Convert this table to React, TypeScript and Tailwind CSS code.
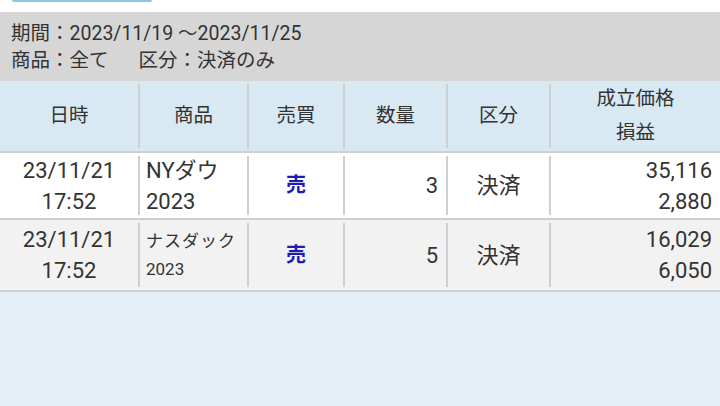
const cols =
  "grid grid-cols-[138px_2px_107px_2px_94px_2px_101px_2px_101px_2px_1fr]";

const rows = [
  {
    date: "23/11/21",
    time: "17:52",
    name: "NYダウ",
    year: "2023",
    small: false,
    qty: "3",
    kind: "決済",
    price: "35,116",
    pl: "2,880",
    bg: "bg-white",
    h: "h-[65px]",
  },
  {
    date: "23/11/21",
    time: "17:52",
    name: "ナスダック",
    year: "2023",
    small: true,
    qty: "5",
    kind: "決済",
    price: "16,029",
    pl: "6,050",
    bg: "bg-[#f2f2f2]",
    h: "h-[70px]",
  },
];

function Sep() {
  return <div className="my-[3px] bg-[#cdd0d3]" />;
}

export default function App() {
  return (
    <div
      className="w-[720px] h-[406px] bg-[#e3eef6] text-[#333] overflow-hidden"
      style={{ fontFamily: "Roboto, 'Noto Sans CJK JP', sans-serif" }}
    >
      {/* ボタンの下端 */}
      <div className="h-[12px] bg-white">
        <div className="ml-[12px] w-[140px] h-[2px] bg-[#8cc6e2] rounded-b-sm" />
      </div>

      {/* 条件 */}
      <div className="h-[69px] bg-[#d6d6d6] px-[11px] pt-[8px] text-[19.5px] leading-[27px]">
        <p>期間：2023/11/19 〜2023/11/25</p>
        <p>
          商品：全て<span className="inline-block w-[30px]" />区分：決済のみ
        </p>
      </div>

      {/* ヘッダー */}
      <div className={`${cols} h-[70px] bg-[#d9e9f3] text-[19.5px]`}>
        <div className="flex items-center justify-center">日時</div>
        <Sep />
        <div className="flex items-center justify-center">商品</div>
        <Sep />
        <div className="flex items-center justify-center">売買</div>
        <Sep />
        <div className="flex items-center justify-center">数量</div>
        <Sep />
        <div className="flex items-center justify-center">区分</div>
        <Sep />
        <div className="flex flex-col items-center justify-center leading-[34px]">
          <span>成立価格</span>
          <span>損益</span>
        </div>
      </div>
      <div className="h-[2px] bg-[#cdd0d3]" />

      {rows.map((r, i) => (
        <div key={i}>
          <div className={`${cols} ${r.h} ${r.bg} text-[22px] leading-[31px]`}>
            <div className="flex flex-col items-center justify-center">
              <span>{r.date}</span>
              <span>{r.time}</span>
            </div>
            <Sep />
            <div
              className={`flex flex-col justify-center pl-[6px] ${
                r.small ? "text-[17px] leading-[28px] tracking-[1px]" : ""
              }`}
            >
              <span>{r.name}</span>
              <span className={r.small ? "tracking-normal" : ""}>{r.year}</span>
            </div>
            <Sep />
            <div className="flex items-center justify-center text-[20px] font-bold text-[#1c1cb4]">
              売
            </div>
            <Sep />
            <div className="flex items-center justify-end pr-[8px]">{r.qty}</div>
            <Sep />
            <div className="flex items-center justify-center">{r.kind}</div>
            <Sep />
            <div className="flex flex-col items-end justify-center pr-[8px]">
              <span>{r.price}</span>
              <span>{r.pl}</span>
            </div>
          </div>
          <div className="h-[2px] bg-[#cdd0d3]" />
        </div>
      ))}
    </div>
  );
}
